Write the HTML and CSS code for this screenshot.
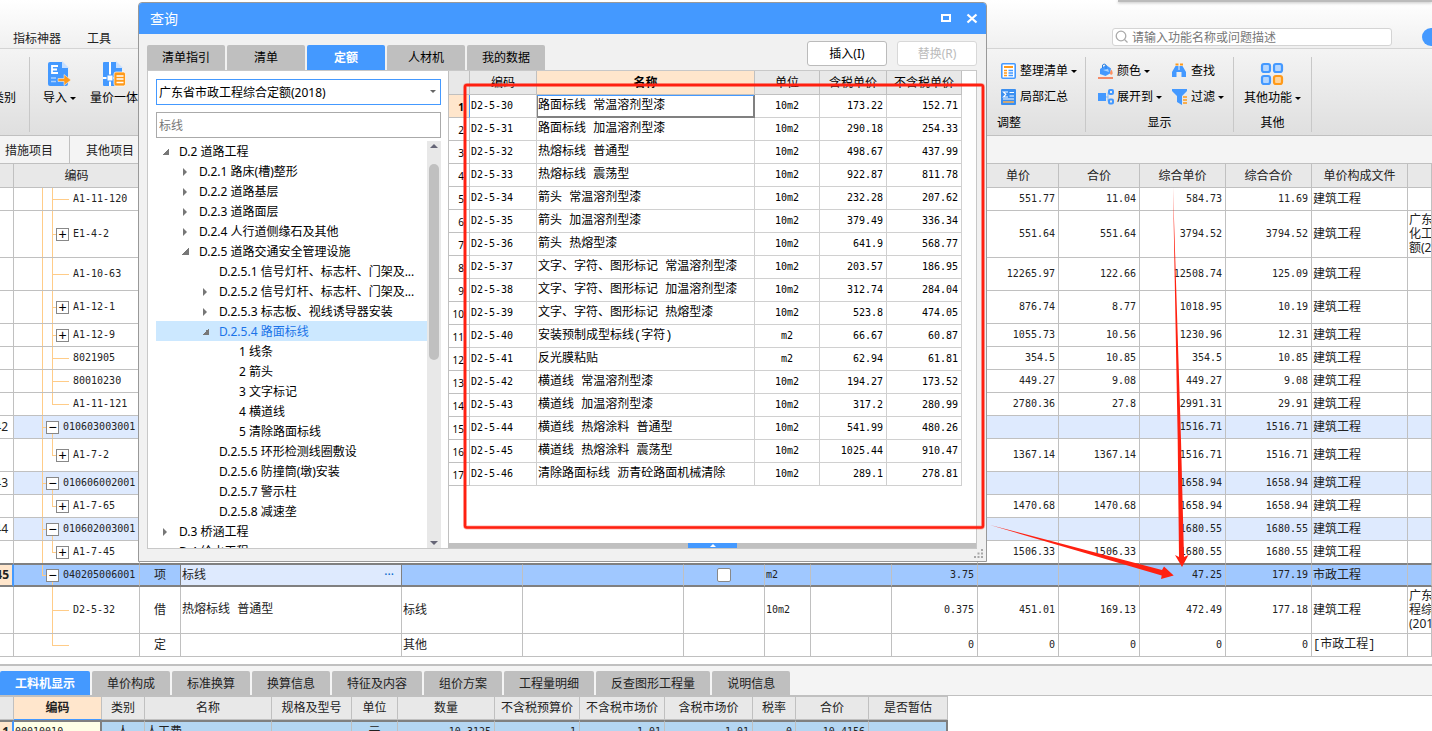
FILE: index.html
```html
<!DOCTYPE html>
<html lang="zh-CN">
<head>
<meta charset="utf-8">
<title>查询</title>
<link rel="stylesheet" href="styles.css">
</head>
<body>
<div class="app">
  <header class="menubar">
    <nav class="menus"><a href="#">指标神器</a><a href="#">工具</a></nav>
    <label class="find">
      <svg width="14" height="14" viewBox="0 0 14 14" fill="none" stroke="#aaa" stroke-width="1.3"><circle cx="6" cy="6" r="4.8"/><path d="M9.5 9.5l3 3"/></svg>
      <input type="text" aria-label="搜索" placeholder="请输入功能名称或问题描述">
    </label>
    <span class="avatar"></span>
    <span class="edge"></span>
  </header>

  <section class="ribbon">
    <div class="rgroup first"><button class="big cut">类别</button></div>
    <div class="rgroup left">
      <button class="big">
        <svg width="24" height="26" viewBox="0 0 24 26"><path d="M2 1h12l6 6v16q0 2-2 2H2q-2 0-2-2V3q0-2 2-2z" fill="#49f"/><path d="M14 0v7h7z" fill="#c8e0ff"/><path d="M4 5h6M4 8.500h5M4 12h6M4 4v9" stroke="#fff" stroke-width="1.800"/><path d="M3 17h5M3 20.500h5" stroke="#a8d0ff" stroke-width="1.500"/><path d="M10 17.500h6v-4l7 5.500-7 5.500v-4h-6z" fill="#ff9a1a" stroke="#f0f0f0" stroke-width=".6"/></svg>
        <span>导入<i class="caret"></i></span>
      </button>
      <button class="big">
        <svg width="24" height="26" viewBox="0 0 24 26"><path d="M2 1h12l6 6v18H2q-1 0-1-1V2q0-1 1-1z" fill="#49f"/><path d="M14 0v7h7z" fill="#c8e0ff"/><path d="M8 1v24M1 17h12" stroke="#fff" stroke-width="2"/><path d="M5 14h6v6H5z" fill="#fff" stroke="#49f"/><rect x="12" y="11" width="11.500" height="14" rx="2" fill="#ff9a1a" stroke="#fff" stroke-width=".7"/><path d="M14.500 15h7M14.500 18h7M14.500 21.500h7" stroke="#fff" stroke-width="1.500"/></svg>
        <span>量价一体</span>
      </button>
    </div>
    <div class="rgroup adjust">
      <div class="cmds">
        <button><svg width="16" height="16" viewBox="0 0 16 16"><rect x=".8" y=".8" width="13.400" height="14.400" rx="1" fill="#fff" stroke="#49f" stroke-width="1.600"/><path d="M3 4h9" stroke="#ff9a1a" stroke-width="2"/><path d="M3 7.500h3M3 10h3M3 12.500h3" stroke="#ff9a1a" stroke-width="1.300"/><path d="M7.500 7.500H12M7.500 10H12M7.500 12.500H12" stroke="#49f" stroke-width="1.300"/></svg>整理清单<i class="caret"></i></button>
        <button><svg width="16" height="16" viewBox="0 0 16 16"><rect width="15" height="16" rx="1" fill="#3b8ff0"/><path d="M7 3H2.500l2.300 2.300L2.500 8H7M8.500 3.500H13M8.500 7H13M2 10h11" stroke="#fff" stroke-width="1.200" fill="none"/><path d="M2 13h11" stroke="#ffb050" stroke-width="1.500"/></svg>局部汇总</button>
      </div>
      <h3>调整</h3>
    </div>
    <div class="rgroup show">
      <div class="cmds two">
        <button><svg width="16" height="16" viewBox="0 0 16 16"><path d="M2 6l6-4 5 3.500-1 5-4.500 2.500L2 11z" fill="#49f"/><path d="M4.500 5V2q1.500-2 3.500 0v4" stroke="#2a80e0" fill="none"/><path d="M5 7l5-1 1 3z" fill="#a8d4ff"/><path d="M13.500 6.500q2 4 .5 5t-2-1q0-2 1.500-4z" fill="#ff9060"/><path d="M0 15h15" stroke="#f4805c" stroke-width="1.800"/></svg>颜色<i class="caret"></i></button>
        <button><svg width="16" height="16" viewBox="0 0 16 16"><path d="M3.500 3h3v4h1V3h3L14 9v5H9.500V9h-5v5H0V9z" fill="#49f"/><path d="M3.500 1.500h3M8 1.500h3" stroke="#ff9a1a" stroke-width="1.800"/></svg>查找</button>
        <button><svg width="16" height="16" viewBox="0 0 16 16" fill="none" stroke="#49f"><path d="M0 4h8v8H0z" fill="#49f" stroke="none"/><path d="M8 8h2V3.500h1.500M10 8v4.500h1.500" stroke="#7db8ff"/><rect x="11" y="1" width="4" height="4" rx="1" stroke-width="2"/><rect x="11" y="10.500" width="4" height="4" rx="1" stroke-width="2"/></svg>展开到<i class="caret"></i></button>
        <button><svg width="16" height="16" viewBox="0 0 16 16"><path d="M0 0h15v2l-5 5v9l-5-3V7L0 2z" fill="#49f"/><path d="M11 8h4M11 11h4M11 14h4" stroke="#ff9a1a" stroke-width="1.400"/></svg>过滤<i class="caret"></i></button>
      </div>
      <h3>显示</h3>
    </div>
    <div class="rgroup other">
      <button class="big">
        <svg width="24" height="26" viewBox="0 0 24 26" stroke-width="2.200" fill="#b4d6ff"><rect x="2" y="3" width="8" height="8" rx="2" stroke="#49f"/><rect x="14" y="3" width="8" height="8" rx="2" stroke="#49f"/><rect x="2" y="15" width="8" height="8" rx="2" stroke="#49f"/><rect x="14" y="15" width="8" height="8" rx="2" stroke="#ff9a1a" fill="#ffd49a"/></svg>
        <span>其他功能<i class="caret"></i></span>
      </button>
      <h3>其他</h3>
    </div>
  </section>

  <nav class="subtabs"><a href="#">措施项目</a><a href="#">其他项目</a></nav>

  <table class="grid main">
    <colgroup><col class="w14"><col class="w126"><col class="w41"><col class="w221"><col class="w121"><col class="w161"><col class="w81"><col class="w46"><col class="w81"><col class="w86"><col class="w81"><col class="w81"><col class="w86"><col class="w86"><col class="w96"><col></colgroup>
    <thead><tr><th></th><th>编码</th><th colspan="8"></th><th>单价</th><th>合价</th><th>综合单价</th><th>综合合价</th><th>单价构成文件</th><th></th></tr></thead>
    <tbody>
      <tr><td></td><td class="c leaf"><div>A1-11-120</div></td><td colspan="8"></td><td class="n">551.77</td><td class="n">11.04</td><td class="n">584.73</td><td class="n">11.69</td><td>建筑工程</td><td></td></tr>
      <tr class="h47"><td></td><td class="c"><div><button>+</button>E1-4-2</div></td><td colspan="8"></td><td class="n">551.64</td><td class="n">551.64</td><td class="n">3794.52</td><td class="n">3794.52</td><td>建筑工程</td><td>广东<br>化工<br>额(2</td></tr>
      <tr class="h33"><td></td><td class="c leaf"><div>A1-10-63</div></td><td colspan="8"></td><td class="n">12265.97</td><td class="n">122.66</td><td class="n">12508.74</td><td class="n">125.09</td><td>建筑工程</td><td></td></tr>
      <tr class="h33"><td></td><td class="c"><div><button>+</button>A1-12-1</div></td><td colspan="8"></td><td class="n">876.74</td><td class="n">8.77</td><td class="n">1018.95</td><td class="n">10.19</td><td>建筑工程</td><td></td></tr>
      <tr><td></td><td class="c"><div><button>+</button>A1-12-9</div></td><td colspan="8"></td><td class="n">1055.73</td><td class="n">10.56</td><td class="n">1230.96</td><td class="n">12.31</td><td>建筑工程</td><td></td></tr>
      <tr><td></td><td class="c leaf"><div>8021905</div></td><td colspan="8"></td><td class="n">354.5</td><td class="n">10.85</td><td class="n">354.5</td><td class="n">10.85</td><td>建筑工程</td><td></td></tr>
      <tr><td></td><td class="c leaf"><div>80010230</div></td><td colspan="8"></td><td class="n">449.27</td><td class="n">9.08</td><td class="n">449.27</td><td class="n">9.08</td><td>建筑工程</td><td></td></tr>
      <tr><td></td><td class="c leaf last"><div>A1-11-121</div></td><td colspan="8"></td><td class="n">2780.36</td><td class="n">27.8</td><td class="n">2991.31</td><td class="n">29.91</td><td>建筑工程</td><td></td></tr>
      <tr class="item"><td class="no"><div>42</div></td><td class="c par"><div><button>−</button>010603003001</div></td><td colspan="8"></td><td></td><td></td><td class="n">1516.71</td><td class="n">1516.71</td><td>建筑工程</td><td></td></tr>
      <tr class="h33"><td></td><td class="c last"><div><button>+</button>A1-7-2</div></td><td colspan="8"></td><td class="n">1367.14</td><td class="n">1367.14</td><td class="n">1516.71</td><td class="n">1516.71</td><td>建筑工程</td><td></td></tr>
      <tr class="item"><td class="no"><div>43</div></td><td class="c par"><div><button>−</button>010606002001</div></td><td colspan="8"></td><td></td><td></td><td class="n">1658.94</td><td class="n">1658.94</td><td>建筑工程</td><td></td></tr>
      <tr><td></td><td class="c last"><div><button>+</button>A1-7-65</div></td><td colspan="8"></td><td class="n">1470.68</td><td class="n">1470.68</td><td class="n">1658.94</td><td class="n">1658.94</td><td>建筑工程</td><td></td></tr>
      <tr class="item"><td class="no"><div>44</div></td><td class="c par"><div><button>−</button>010602003001</div></td><td colspan="8"></td><td></td><td></td><td class="n">1680.55</td><td class="n">1680.55</td><td>建筑工程</td><td></td></tr>
      <tr class="before"><td></td><td class="c last"><div><button>+</button>A1-7-45</div></td><td colspan="8"></td><td class="n">1506.33</td><td class="n">1506.33</td><td class="n">1680.55</td><td class="n">1680.55</td><td>建筑工程</td><td></td></tr>
      <tr class="sel"><td class="no"><div>45</div></td><td class="c par end"><div><button>−</button>040205006001</div></td><td class="m">项</td><td class="edit"><div>标线<button aria-label="更多">···</button></div></td><td></td><td></td><td class="m"><input type="checkbox" aria-label="主要清单"></td><td class="u">m2</td><td></td><td class="n">3.75</td><td></td><td></td><td class="n">47.25</td><td class="n">177.19</td><td>市政工程</td><td></td></tr>
      <tr class="h47"><td></td><td class="c leaf tail"><div>D2-5-32</div></td><td class="m">借</td><td class="name">热熔标线 普通型</td><td>标线</td><td></td><td></td><td class="u">10m2</td><td></td><td class="n">0.375</td><td class="n">451.01</td><td class="n">169.13</td><td class="n">472.49</td><td class="n">177.18</td><td>建筑工程</td><td>广东<br>程综<br>(201</td></tr>
      <tr><td></td><td class="c leaf tail last"></td><td class="m">定</td><td></td><td>其他</td><td></td><td></td><td></td><td></td><td class="n">0</td><td class="n">0</td><td class="n">0</td><td class="n">0</td><td class="n">0</td><td class="name">[市政工程]</td><td></td></tr>
    </tbody>
  </table>

  <nav class="tabs bottom"><button class="on">工料机显示</button><button>单价构成</button><button>标准换算</button><button>换算信息</button><button>特征及内容</button><button>组价方案</button><button>工程量明细</button><button>反查图形工程量</button><button>说明信息</button></nav>

  <table class="grid detail">
    <colgroup><col class="w14"><col class="w88"><col class="w43"><col class="w127"><col class="w80"><col class="w46"><col class="w97"><col class="w85"><col class="w85"><col class="w88"><col class="w43"><col class="w73"><col class="w79"></colgroup>
    <thead><tr><th></th><th class="hot">编码</th><th>类别</th><th>名称</th><th>规格及型号</th><th>单位</th><th>数量</th><th>不含税预算价</th><th>不含税市场价</th><th>含税市场价</th><th>税率</th><th>合价</th><th>是否暂估</th></tr></thead>
    <tbody><tr><td class="no"><div>1</div></td><td class="code">00010010</td><td class="m">人</td><td>人工费</td><td></td><td class="m">元</td><td class="n">10.3125</td><td class="n">1</td><td class="n">1.01</td><td class="n">1.01</td><td class="n">0</td><td class="n">10.4156</td><td></td></tr></tbody>
  </table>
</div>

<div class="dialog" role="dialog" aria-label="查询">
  <div class="title"><h2>查询</h2>
    <button aria-label="最大化"><svg width="12" height="12" viewBox="0 0 12 12"><path d="M2 2h8v6H2z" fill="none" stroke="#fff" stroke-width="2"/></svg></button>
    <button aria-label="关闭"><svg width="12" height="12" viewBox="0 0 12 12"><path d="M1.500 1.500l9 8M10.500 1.500l-9 8" stroke="#fff" stroke-width="2.300"/></svg></button>
  </div>
  <div class="bar">
    <nav class="tabs"><button>清单指引</button><button>清单</button><button class="on">定额</button><button>人材机</button><button>我的数据</button></nav>
    <div class="acts"><button>插入(I)</button><button disabled>替换(R)</button></div>
  </div>
  <div class="panes">
    <div class="side">
      <div class="combo"><select aria-label="定额库"><option>广东省市政工程综合定额(2018)</option></select></div>
      <input class="filter" type="text" aria-label="过滤条件" placeholder="标线">
      <div class="treebox">
        <ul class="tree">
          <li class="open">D.2 道路工程</li>
          <li class="l1 shut">D.2.1 路床(槽)整形</li>
          <li class="l1 shut">D.2.2 道路基层</li>
          <li class="l1 shut">D.2.3 道路面层</li>
          <li class="l1 shut">D.2.4 人行道侧缘石及其他</li>
          <li class="l1 open">D.2.5 道路交通安全管理设施</li>
          <li class="l2">D.2.5.1 信号灯杆、标志杆、门架及...</li>
          <li class="l2 shut">D.2.5.2 信号灯杆、标志杆、门架及...</li>
          <li class="l2 shut">D.2.5.3 标志板、视线诱导器安装</li>
          <li class="l2 open picked">D.2.5.4 路面标线</li>
          <li class="l3">1 线条</li>
          <li class="l3">2 箭头</li>
          <li class="l3">3 文字标记</li>
          <li class="l3">4 横道线</li>
          <li class="l3">5 清除路面标线</li>
          <li class="l2">D.2.5.5 环形检测线圈敷设</li>
          <li class="l2">D.2.5.6 防撞筒(墩)安装</li>
          <li class="l2">D.2.5.7 警示柱</li>
          <li class="l2">D.2.5.8 减速垄</li>
          <li class="shut">D.3 桥涵工程</li>
          <li class="shut">D.4 给水工程</li>
        </ul>
        <div class="scroll"><i class="up"></i><span></span><i class="down"></i></div>
      </div>
    </div>
    <div class="result">
      <table class="grid quota">
        <colgroup><col class="w21"><col class="w67"><col class="w218"><col class="w65"><col class="w67"><col class="w75"></colgroup>
        <thead><tr><th></th><th>编码</th><th class="hot">名称</th><th>单位</th><th>含税单价</th><th>不含税单价</th></tr></thead>
        <tbody>
          <tr class="cur"><td>1</td><td>D2-5-30</td><td>路面标线 常温溶剂型漆</td><td>10m2</td><td>173.22</td><td>152.71</td></tr>
          <tr><td>2</td><td>D2-5-31</td><td>路面标线 加温溶剂型漆</td><td>10m2</td><td>290.18</td><td>254.33</td></tr>
          <tr><td>3</td><td>D2-5-32</td><td>热熔标线 普通型</td><td>10m2</td><td>498.67</td><td>437.99</td></tr>
          <tr><td>4</td><td>D2-5-33</td><td>热熔标线 震荡型</td><td>10m2</td><td>922.87</td><td>811.78</td></tr>
          <tr><td>5</td><td>D2-5-34</td><td>箭头 常温溶剂型漆</td><td>10m2</td><td>232.28</td><td>207.62</td></tr>
          <tr><td>6</td><td>D2-5-35</td><td>箭头 加温溶剂型漆</td><td>10m2</td><td>379.49</td><td>336.34</td></tr>
          <tr><td>7</td><td>D2-5-36</td><td>箭头 热熔型漆</td><td>10m2</td><td>641.9</td><td>568.77</td></tr>
          <tr><td>8</td><td>D2-5-37</td><td>文字、字符、图形标记 常温溶剂型漆</td><td>10m2</td><td>203.57</td><td>186.95</td></tr>
          <tr><td>9</td><td>D2-5-38</td><td>文字、字符、图形标记 加温溶剂型漆</td><td>10m2</td><td>312.74</td><td>284.04</td></tr>
          <tr><td>10</td><td>D2-5-39</td><td>文字、字符、图形标记 热熔型漆</td><td>10m2</td><td>523.8</td><td>474.05</td></tr>
          <tr><td>11</td><td>D2-5-40</td><td>安装预制成型标线(字符)</td><td>m2</td><td>66.67</td><td>60.87</td></tr>
          <tr><td>12</td><td>D2-5-41</td><td>反光膜粘贴</td><td>m2</td><td>62.94</td><td>61.81</td></tr>
          <tr><td>13</td><td>D2-5-42</td><td>横道线 常温溶剂型漆</td><td>10m2</td><td>194.27</td><td>173.52</td></tr>
          <tr><td>14</td><td>D2-5-43</td><td>横道线 加温溶剂型漆</td><td>10m2</td><td>317.2</td><td>280.99</td></tr>
          <tr><td>15</td><td>D2-5-44</td><td>横道线 热熔涂料 普通型</td><td>10m2</td><td>541.99</td><td>480.26</td></tr>
          <tr><td>16</td><td>D2-5-45</td><td>横道线 热熔涂料 震荡型</td><td>10m2</td><td>1025.44</td><td>910.47</td></tr>
          <tr><td>17</td><td>D2-5-46</td><td>清除路面标线 沥青砼路面机械清除</td><td>10m2</td><td>289.1</td><td>278.81</td></tr>
        </tbody>
      </table>
      <div class="fold"><button aria-label="展开"></button></div>
    </div>
  </div>
  <svg class="grip" width="10" height="10" viewBox="0 0 10 10" fill="#a8a8a8"><path d="M7 0h2v2H7zM7 3.500h2v2H7zM7 7h2v2H7zM3.500 3.500h2v2h-2zM3.500 7h2v2h-2zM0 7h2v2H0z"/></svg>
</div>

<svg class="marks" width="1200" height="600" viewBox="0 0 1200 600">
  <rect x="465" y="85" width="518" height="442.500" rx="2" fill="none" stroke="#ff2010" stroke-opacity=".35" stroke-width="4"/>
  <rect x="465" y="85" width="518" height="442.500" rx="2" fill="none" stroke="#ff2010" stroke-width="2.400"/>
  <path d="M1173 187l4.700 253L1179 557l-4-2 7 12 6.500-12-4.500 2L1181 440z" fill="#ff2010"/>
  <path d="M990 525l172 45 2-3.500 9.700 9-12.700 3.500.7-3.500z" fill="#ff2010"/>
</svg>
</body>
</html>
```
FILE: styles.css
```css
* { box-sizing: border-box; }
html, body { height: 100%; }
body { margin: 0; overflow: hidden; position: relative; background: #fff; color: #222; font: 12px/14px "Noto Sans", "Noto Sans CJK SC", sans-serif; }
button, input, select { font: inherit; color: inherit; }
button { border: 0; padding: 0; background: none; white-space: nowrap; }
a { color: inherit; text-decoration: none; }
h2, h3 { margin: 0; font-size: 12px; font-weight: 400; }
svg { display: block; flex: none; }

.app { height: 100%; display: flex; flex-direction: column; overflow: hidden; }
.app > * { flex: none; }

.menubar { position: relative; height: 49px; display: flex; padding-top: 28px; background: linear-gradient(#fff, #f0f0f0); border-bottom: 1px solid #d4d4d4; }
.menus { display: flex; gap: 26px; padding: 4px 0 0 13px; }
.find { margin-left: auto; margin-right: 30px; width: 280px; height: 18px; display: flex; align-items: center; gap: 3px; padding-left: 2px; background: #fff; border: 1px solid #d4d4d4; border-radius: 3px; }
.find input { flex: 1; min-width: 0; height: 16px; padding: 0; border: 0; background: none; }
input::placeholder { color: #777; opacity: 1; }
.avatar { width: 10px; height: 18px; border-radius: 9px 0 0 9px; background: #49f; }
.edge { position: absolute; top: 0; right: 0; width: 314px; height: 2px; background: #bbb; box-shadow: 0 1px 3px #bbb; }

.ribbon { display: flex; height: 87px; padding: 8px 0 3px; background: linear-gradient(#f4f4f4, #dfdfdf); border-bottom: 1px solid #c0c0c0; color: #000; }
.rgroup { display: flex; flex-direction: column; justify-content: space-between; border-right: 1px solid #c8c8c8; }
.first { width: 30px; padding: 34px 13px 0 0; }
.left { flex: 0 0 957px; flex-direction: row; justify-content: flex-start; gap: 14px; padding: 4px 0 0 13px; border: 0; }
.big { display: flex; flex-direction: column; align-items: center; gap: 4px; align-self: flex-start; }
.first .cut { align-self: flex-end; }
.ribbon h3 { text-align: center; padding-bottom: 2px; }
.adjust { width: 99px; padding-left: 14px; }
.ribbon .adjust h3 { text-align: left; margin-left: -4px; }
.show { width: 148px; }
.other { width: 78px; align-items: center; padding-top: 4px; }
.other .big { align-self: center; }
.cmds { display: grid; grid-auto-rows: 26px; padding-top: 1px; }
.two { grid-template-columns: 74px auto; padding-left: 12px; }
.cmds button { display: flex; align-items: center; gap: 3px; }
.caret { display: inline-block; vertical-align: middle; margin-left: 3px; border: 3px solid transparent; border-top-color: #000; border-bottom: 0; }
.cmds .caret { margin-left: 0; }

.subtabs { display: flex; height: 27px; background: #f4f4f4; }
.subtabs a { padding: 8px 16px 5px; border-right: 1px solid #c0c0c0; }
.subtabs a:first-child { padding-left: 5px; }

.grid { border-collapse: separate; border-spacing: 0; table-layout: fixed; }
.grid th, .grid td { padding: 0 1px; border: solid #c0c0c0; border-width: 0 1px 1px 0; white-space: nowrap; overflow: hidden; text-align: left; }
.grid th { background: #e8e8e8; text-align: center; font-weight: 400; }
.grid tr { height: 23px; }
.grid .hot { background: #ffe6cc; font-weight: 700; }
.grid .n, .c, .grid .u, .grid .code, .quota td { font-family: "DejaVu Sans Mono", "Noto Sans CJK SC", monospace; font-size: 10px; }
.grid .name { font-family: "Liberation Mono", "Noto Sans CJK SC", monospace; }
.grid .n { text-align: right; padding-right: 3px; }
.grid .m { text-align: center; }
.main { width: 100%; border-top: 1px solid #c0c0c0; }
.main thead tr { height: 24px; }
.main .h33 { height: 33px; }
.main .h47 { height: 47px; }
.item td:not(.no) { background-color: #deeafe; }
.main .before td { border-bottom-color: #808080; }
.main .sel td { background-color: #a0c8ff; border-top: 1px solid #808080; border-bottom: 2px solid #808080; }
.main .sel td:nth-child(3), .main .sel td:nth-child(4) { border-right-color: #808080; }
.main .sel .edit { background-color: #deeafe; }
.edit div { display: flex; justify-content: space-between; padding-right: 6px; }
.edit button { color: #06c; }
.grid td.no { padding: 0 5px 0 0; }
.grid .sel .no, .grid.detail .no { padding-right: 3px; }
.no div { display: flex; justify-content: flex-end; }
.main .sel .no, .detail .no { background-color: #ffe6cc; border-right: 2px solid #49f; font-weight: 700; }
.sel input { display: block; appearance: none; width: 14px; height: 14px; margin: 0 auto; background: #fff; border: 1px solid #888; border-radius: 2px; }

.grid .c { --outer: 100%; --inner: 100%; --from: 0; --tick: 38px; --len: 5px; padding: 0;
  background-image: linear-gradient(#fc8, #fc8), linear-gradient(#fc8, #fc8), linear-gradient(#fc8, #fc8);
  background-repeat: no-repeat; background-size: 1px var(--outer), 1px var(--inner), var(--len) 1px;
  background-position: 28px 0, 38px var(--from), var(--tick) 50%; }
.c div { display: flex; align-items: center; gap: 4px; padding-left: 42px; }
.c button { width: 13px; height: 13px; border: 1px solid #888; background: #fff; font: 14px/11px "Liberation Sans", sans-serif; color: #000; }
.grid .leaf { --len: 17px; }
.leaf div { padding-left: 59px; }
.grid .last { --inner: 50%; }
.grid .par { --inner: 50%; --from: 100%; --tick: 28px; }
.par div { padding-left: 32px; }
.grid .end { --outer: 50%; }
.grid .tail { --outer: 0; }

.tabs { display: flex; gap: 2px; }
.tabs button { height: 24px; padding: 1px 15px 0; background: #bfbfbf; border-radius: 2px 2px 0 0; }
.tabs .on { background: #49f; color: #fff; font-weight: 700; }
.bottom { margin-top: 7px; padding-top: 5px; background: #f4f4f4; border-top: 2px solid #c0c0c0; border-bottom: 1px solid #c0c0c0; }
.detail { width: 948px; border-top: 1px solid #c0c0c0; }
.detail .hot { border-bottom-color: #49f; }
.detail td { background: #b4d6f2; border-top: 2px solid #808080; }
.grid .code { background: #ffffe6; border-right: 2px solid #808080; }
.detail td:last-child { border-right: 2px solid #808080; }

.w14 { width: 14px; } .w21 { width: 21px; } .w41 { width: 41px; } .w43 { width: 43px; } .w46 { width: 46px; }
.w65 { width: 65px; } .w67 { width: 67px; } .w73 { width: 73px; } .w75 { width: 75px; } .w79 { width: 79px; }
.w80 { width: 80px; } .w81 { width: 81px; } .w85 { width: 85px; } .w86 { width: 86px; } .w88 { width: 88px; }
.w96 { width: 96px; } .w97 { width: 97px; } .w121 { width: 121px; } .w126 { width: 126px; } .w127 { width: 127px; }
.w161 { width: 161px; } .w218 { width: 218px; } .w221 { width: 221px; }

.dialog { position: absolute; left: 138px; top: 2px; width: 849px; height: 560px; display: flex; flex-direction: column; background: #f1f1f1; border: 1px solid #999; border-radius: 4px 4px 0 0; overflow: hidden; color: #000; }
.title { flex: none; display: flex; align-items: center; gap: 14px; height: 31px; padding: 0 8px 0 11px; background: #49f; color: #fff; }
.title h2 { flex: 1; font-size: 14px; line-height: 20px; padding-top: 1px; }
.bar { flex: none; display: flex; justify-content: space-between; padding: 7px 9px 0 8px; height: 36px; }
.bar .tabs { align-items: flex-end; }
.bar .tabs button { width: 78px; height: 25px; padding: 0; }
.acts { display: flex; gap: 10px; }
.acts button { width: 80px; height: 25px; background: #fff; border: 1px solid #bbb; border-radius: 3px; }
.acts button:disabled { color: #bbb; border-color: #d8d8d8; }
.panes { flex: 1; min-height: 0; display: flex; margin: 0 9px 12px 8px; background: #fff; border: 1px solid #c8c8c8; }
.side { width: 300px; padding: 8px 7px 0 8px; display: flex; flex-direction: column; }
.combo { position: relative; flex: none; }
.combo::after { content: ""; position: absolute; right: 5px; top: 11px; border: 3px solid transparent; border-top-color: #666; border-bottom: 0; }
.combo select { display: block; appearance: none; width: 100%; height: 26px; padding: 1px 2px 0; border: 1px solid #49f; border-radius: 0; background: #fff; }
.filter { flex: none; height: 26px; margin: 7px 0 3px; padding: 0 2px; border: 1px solid #aaa; }
.treebox { flex: 1; min-height: 0; display: flex; }
.tree { flex: 1; min-width: 0; margin: 0; padding: 0; list-style: none; overflow: hidden; }
.tree li { display: flex; align-items: center; height: 20px; padding: 2px 0 0 6px; white-space: nowrap; }
.tree li::before { content: ""; flex: none; width: 17px; height: 8px; background: no-repeat 0 0; }
.tree .open::before { background-image: linear-gradient(135deg, transparent 50%, #777 50%); background-size: 7px 7px; }
.tree .shut::before { margin-left: 1px; width: 16px; height: 8px; background: #777; clip-path: polygon(0 0, 4px 50%, 0 100%); }
.tree .l1 { padding-left: 26px; } .tree .l2 { padding-left: 46px; } .tree .l3 { padding-left: 66px; }
.tree .picked { background: #cce8ff; color: #1a73e8; }
.scroll { width: 14px; display: flex; flex-direction: column; align-items: center; padding: 3px 0; background: #e8e8e8; }
.scroll span { width: 10px; height: 196px; margin: 16px 0 auto; border-radius: 5px; background: #c0c0c0; }
.scroll .up { border: 4px solid transparent; border-top: 0; border-bottom-color: #667; }
.scroll .down { border: 4px solid transparent; border-bottom: 0; border-top-color: #667; }
.result { flex: 1; display: flex; flex-direction: column; justify-content: space-between; border-left: 1px solid #c0c0c0; }
.quota { width: 513px; }
.quota thead tr { height: 24px; }
.grid.quota th { padding-top: 1px; }
.grid.quota td { border-color: #d0d0d0; }
.grid.quota td:nth-child(1) { padding: 2px 5px 0 0; text-align: right; border-color: #c0c0c0; font: 10px/14px "Noto Sans", sans-serif; }
.grid.quota td:nth-child(3) { font-size: 12px; font-family: "Liberation Mono", "Noto Sans CJK SC", monospace; }
.quota td:nth-child(4) { text-align: center; }
.grid.quota td:nth-child(n+5) { text-align: right; padding-right: 3px; }
.grid.quota .cur td:nth-child(1) { background: #ffe6cc; font-weight: 700; border-right-color: #49f; }
.quota .cur td:nth-child(3) { box-shadow: inset 0 1px #49f, inset 1px 0 #808080, inset -1px -1px #808080; border-color: #808080; }
.fold { display: flex; justify-content: center; height: 5px; background: #c0c0c0; }
.fold button { width: 49px; background: #49f; }
.fold button::before { content: ""; display: block; width: 0; margin: 0 auto; border: 3px solid transparent; border-top: 0; border-bottom-color: #fff; }
.grip { position: absolute; right: 2px; bottom: 2px; }
.marks { position: absolute; left: 0; top: 0; pointer-events: none; }
```
